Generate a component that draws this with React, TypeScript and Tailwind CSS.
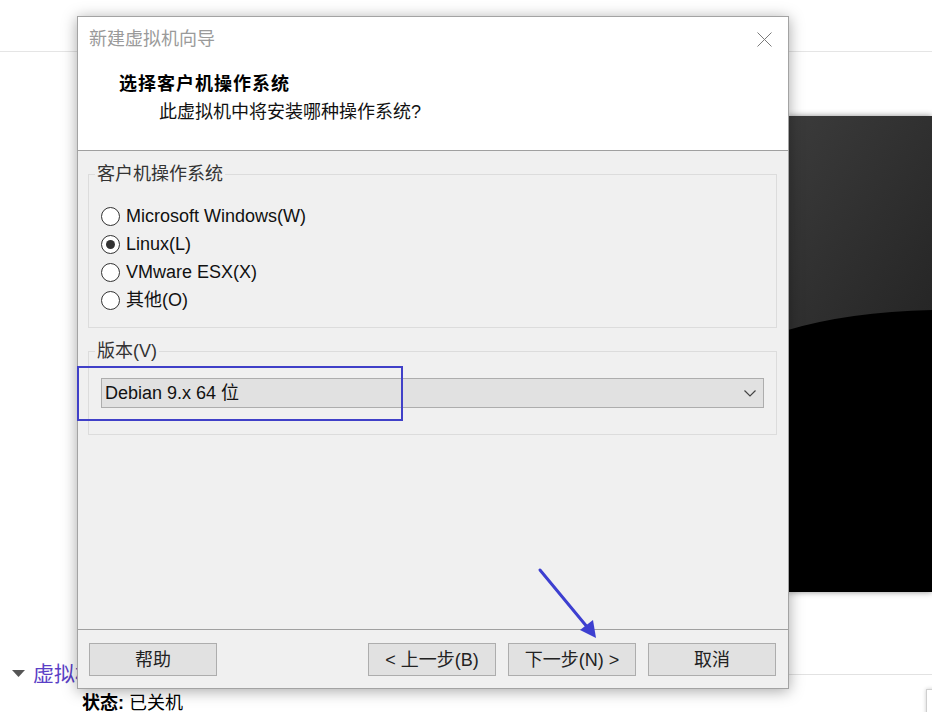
import React from 'react';

const font = "font-['Liberation_Sans','Noto_Sans_CJK_SC',sans-serif]";

function Radio({ label, checked }: { label: string; checked?: boolean }) {
  return (
    <div className="flex items-center h-[28px]">
      <span className="flex items-center justify-center w-[19px] h-[19px] rounded-full border border-[#333] bg-white">
        {checked && <span className="w-[9px] h-[9px] rounded-full bg-[#333]" />}
      </span>
      <span className="ml-[6px] text-[18px] leading-[24px] text-[#111]">{label}</span>
    </div>
  );
}

function Button({ children }: { children: React.ReactNode }) {
  return (
    <button className="w-[128px] h-[33px] border border-[#adadad] bg-[#e1e1e1] text-[18px] leading-[24px] text-[#222]">
      {children}
    </button>
  );
}

export default function App() {
  return (
    <div className={`relative w-[932px] h-[712px] overflow-hidden bg-white ${font}`}>
      {/* page behind the wizard */}
      <div className="h-[52px] border-b border-[#e5e5e5]" />
      <div className="flex justify-end pt-[64px]">
        <div className="w-[144px] h-[476px] bg-black shadow-[0_0_6px_rgba(0,0,0,0.45)]">
          <svg width="144" height="476" viewBox="0 0 144 476">
            <defs>
              <linearGradient id="gloss" x1="0" y1="0" x2="1" y2="1">
                <stop offset="0" stopColor="#3b3b3b" />
                <stop offset="1" stopColor="#252525" />
              </linearGradient>
            </defs>
            <path d="M0 0 H144 V194 Q 60 196 0 214 Z" fill="url(#gloss)" />
          </svg>
        </div>
      </div>
      <div className="flex">
        <div className="flex-1 pt-[68px]">
          <div className="flex items-center h-[28px] pl-[12px]">
            <svg width="13" height="8" viewBox="0 0 13 8">
              <path d="M0 0 H13 L6.5 7 Z" fill="#555" />
            </svg>
            <span className="ml-[8px] text-[21px] leading-[28px] text-[#5a3fc6]">虚拟机</span>
          </div>
          <div className="mt-[3px] pl-[82px] text-[18px] leading-[24px] text-black">
            <span className="font-bold">状态:</span> 已关机
          </div>
        </div>
        <div className="w-[144px]">
          <div className="h-[83px] border-b border-[#e2e2e2]" />
          <div className="pl-[138px] pt-[14px]">
            <div className="w-[20px] h-[30px] border border-[#cfcfcf] bg-white shadow-[0_0_4px_rgba(0,0,0,0.2)]" />
          </div>
        </div>
      </div>

      {/* wizard window */}
      <div className="absolute left-[77px] top-[16px] w-[712px] h-[673px] flex flex-col border border-[#a3a3a3] bg-[#f0f0f0] shadow-[0_2px_14px_rgba(0,0,0,0.35)]">
        <div className="h-[134px] bg-white border-b border-[#a0a0a0]">
          <div className="mt-[10px] h-[24px] flex items-center pl-[11px] pr-[16px]">
            <span className="flex-1 text-[18px] leading-[24px] text-[#9a9a9a]">新建虚拟机向导</span>
            <svg width="15" height="15" viewBox="0 0 15 15">
              <path d="M0.5 0.5 L14.5 14.5 M14.5 0.5 L0.5 14.5" stroke="#7a7a7a" strokeWidth="1" />
            </svg>
          </div>
          <div className="mt-[21px] pl-[41px] text-[18px] leading-[24px] font-bold tracking-[1px] text-black">
            选择客户机操作系统
          </div>
          <div className="mt-[4px] pl-[81px] text-[18px] leading-[24px] text-[#111]">
            此虚拟机中将安装哪种操作系统?
          </div>
        </div>

        <div className="flex-1">
          <fieldset className="mt-[11px] ml-[10px] w-[689px] border border-[#dcdcdc]">
            <legend className="ml-[6px] px-[2px] text-[18px] leading-[24px] text-[#333]">客户机操作系统</legend>
            <div className="pl-[12px] pt-[16px] pb-[13px]">
              <Radio label="Microsoft Windows(W)" />
              <Radio label="Linux(L)" checked />
              <Radio label="VMware ESX(X)" />
              <Radio label="其他(O)" />
            </div>
          </fieldset>
          <fieldset className="mt-[11px] ml-[10px] w-[689px] border border-[#dcdcdc]">
            <legend className="ml-[6px] px-[2px] text-[18px] leading-[24px] text-[#333]">版本(V)</legend>
            <div className="px-[12px] pt-[15px] pb-[26px]">
              <div className="flex items-center h-[30px] border border-[#adadad] bg-[#e1e1e1] pl-[3px] pr-[7px]">
                <span className="flex-1 text-[18px] leading-[24px] text-[#111]">Debian 9.x 64 位</span>
                <svg width="12" height="7" viewBox="0 0 12 7">
                  <path d="M0.5 0.5 L6 6 L11.5 0.5" stroke="#444" strokeWidth="1.2" fill="none" />
                </svg>
              </div>
            </div>
          </fieldset>
        </div>

        <div className="h-[59px] border-t border-[#a0a0a0] flex pt-[13px] pl-[11px] pr-[12px]">
          <Button>帮助</Button>
          <div className="flex-1" />
          <div className="flex gap-[12px]">
            <Button>&lt; 上一步(B)</Button>
            <Button>下一步(N) &gt;</Button>
            <Button>取消</Button>
          </div>
        </div>
      </div>

      {/* annotations */}
      <div className="absolute left-[77px] top-[366px] w-[326px] h-[55px] border-2 border-[#4040c8]" />
      <svg className="absolute left-0 top-0" width="932" height="712" viewBox="0 0 932 712">
        <line x1="540" y1="570" x2="588" y2="628" stroke="#3d3fd0" strokeWidth="3" strokeLinecap="round" />
        <path d="M596 638 L580 630 L593 620 Z" fill="#3d3fd0" />
      </svg>
    </div>
  );
}
